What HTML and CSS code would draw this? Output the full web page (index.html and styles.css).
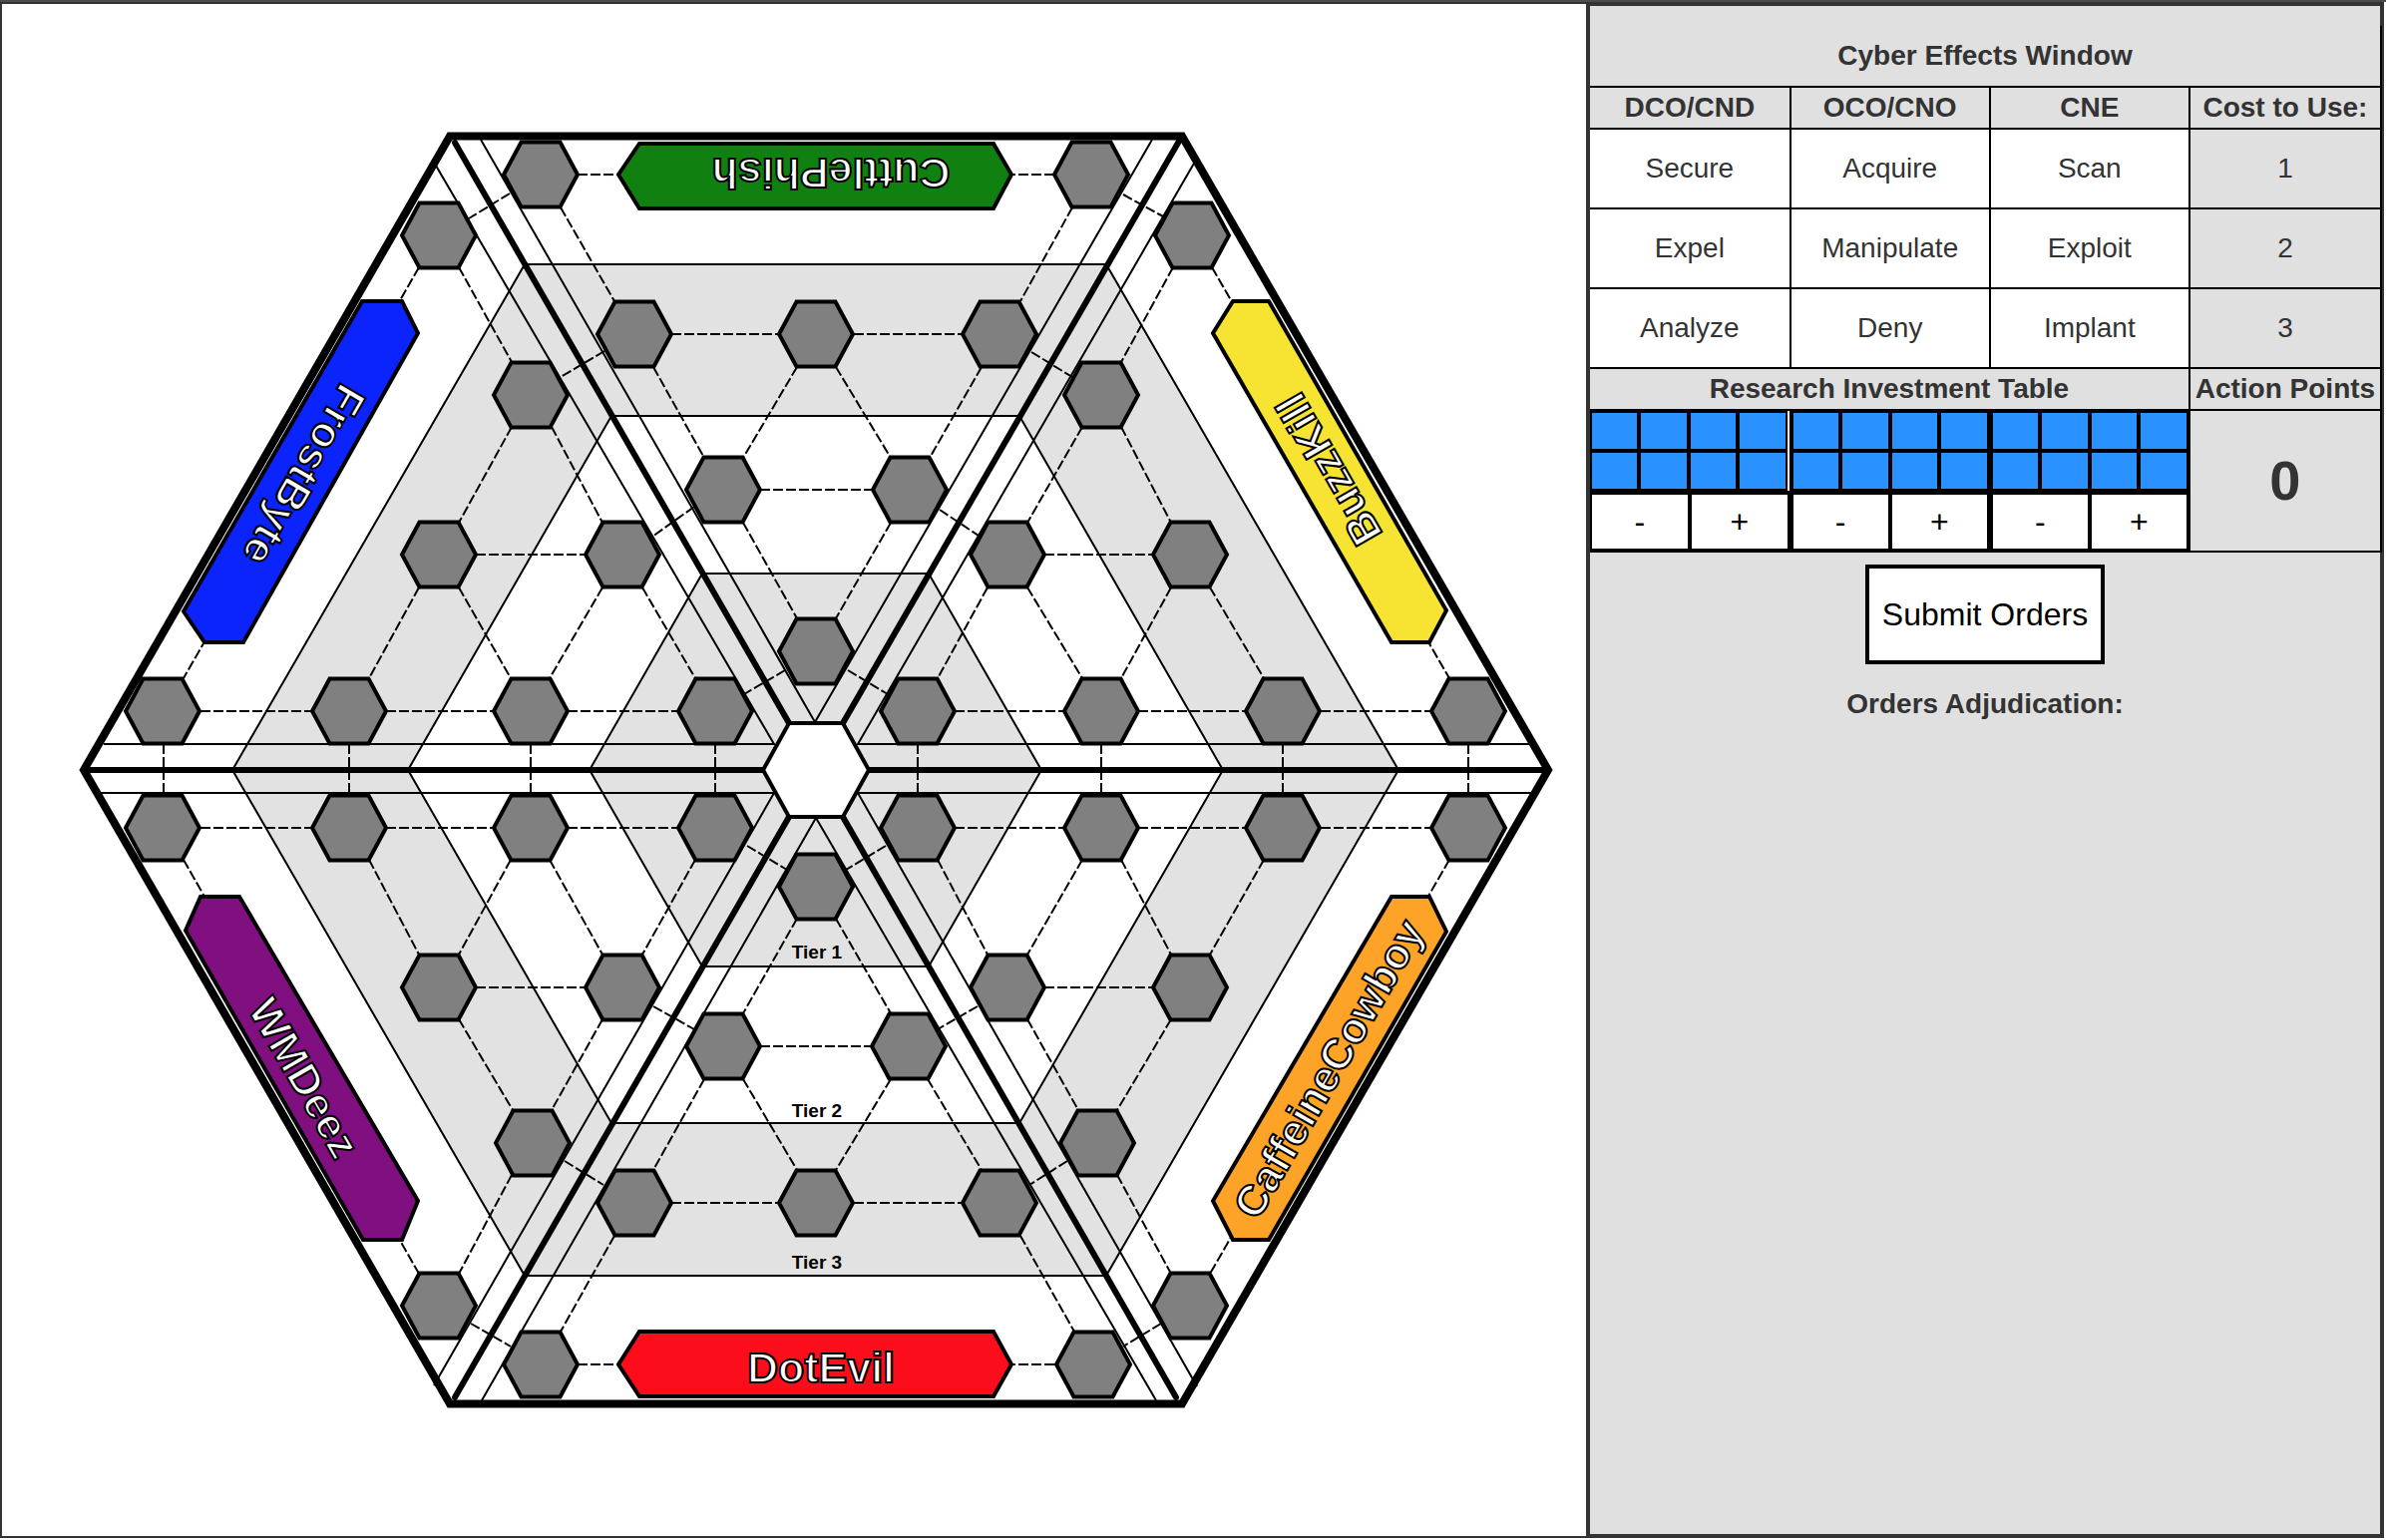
FILE: index.html
```html
<!DOCTYPE html>
<html lang="en">
<head>
<meta charset="utf-8">
<title>Cyber Effects</title>
<meta name="viewport" content="width=device-width, initial-scale=1">
<link rel="stylesheet" href="styles.css">
</head>
<body>
<div class="app">
  <main class="board">
    <svg class="map" viewBox="2 4 1588 1536" role="img" aria-label="Network map">
      <defs>
        <polygon id="node" points="-37,0 -19.5,-32.5 19.5,-32.5 37,0 19.5,32.5 -19.5,32.5"/>
      </defs>

      <!-- tiers, outermost first -->
      <polygon class="field" points="84,772 451,136.5 1185,136.5 1552,772 1185,1407.5 451,1407.5"/>
      <polygon class="tier shaded" points="233,772 526,265 1109,265 1402,772 1109,1279 526,1279"/>
      <polygon class="tier" points="409,772 613,417 1022,417 1226,772 1022,1126 613,1126"/>
      <polygon class="tier shaded" points="591,772 704,575 931,575 1044,772 931,969 704,969"/>

      <!-- sector margins -->
      <g class="margin">
        <polyline points="482,140 817,724 1155,140"/>
        <polyline points="437,166 776,746 104,746"/>
        <polyline points="1198,162 860,746 1534,746"/>
        <polyline points="101,795 776,795 435,1389"/>
        <polyline points="1535,795 860,795 1200,1390"/>
        <polyline points="483,1404 818,820 1159,1404"/>
      </g>

      <!-- sector borders -->
      <g class="spoke">
        <path d="M84 772H766M871 772H1552"/>
        <path d="M456 143L791 725M1184 138L845 725"/>
        <path d="M456 1401L791 819M1179 1401L845 819"/>
      </g>
      <polygon class="hub" points="765,772 791,725 845,725 871,772 845,819 791,819"/>

      <!-- links -->
      <g class="link">
        <path d="M579 175H1057M673 335H782M856 335H966M762 491H875"/>
        <path d="M562 208L616 302M1075 208L1023 302M655 368L706 459M799 368L745 459M838 368L893 459M984 368L932 459M745 524L799 620M893 524L838 620"/>
        <path d="M420 268L184 680M460 268L513 363M513 428L460 524M553 428L604 524M477 556H587M420 589L370 680M460 589L512 680M604 589L551 680M644 589L697 680M201 713H313M387 713H495M569 713H680"/>
        <path d="M1215 268L1453 680M1176 268L1124 363M1124 428L1174 524M1085 428L1030 524M1047 556H1157M1213 589L1267 680M1174 589L1124 680M1030 589L1085 680M990 589L940 680M957 713H1067M1141 713H1250M1324 713H1436"/>
        <path d="M184 862L420 1277M513 1178L460 1277M460 1022L514 1113M604 1022L553 1113M477 990H587M370 862L420 957M512 862L460 957M551 862L604 957M697 862L644 957M201 830H313M387 830H495M569 830H680"/>
        <path d="M1453 862L1213 1277M1120 1178L1174 1277M1174 1022L1120 1113M1030 1022L1081 1113M1047 990H1157M1267 862L1213 957M1124 862L1174 957M1085 862L1030 957M940 862L990 957M957 830H1067M1141 830H1250M1324 830H1436"/>
        <path d="M579 1368H1060M673 1206H782M856 1206H966M762 1049H875"/>
        <path d="M616 1239L562 1335M1023 1239L1077 1335M706 1082L655 1173M745 1082L799 1173M893 1082L838 1173M930 1082L984 1173M799 921L745 1016M838 921L893 1016"/>
        <path d="M511 194L470 219M606 352L562 378M696 508L654 538M787 672L746 696M1126 195L1166 217M1034 353L1075 378M942 511L981 537M850 672L890 696"/>
        <path d="M164 746V795M350 746V795M532 746V795M717 746V795M920 746V795M1104 746V795M1286 746V795M1472 746V795"/>
        <path d="M749 848L789 872M655 1009L696 1032M566 1164L605 1188M472 1327L512 1350M888 848L848 872M980 1009L940 1032M1070 1164L1032 1188M1164 1327L1126 1350"/>
      </g>

      <!-- nodes -->
      <g class="node">
        <use href="#node" x="542" y="175"/><use href="#node" x="1094" y="175"/>
        <use href="#node" x="636" y="335"/><use href="#node" x="818" y="335"/><use href="#node" x="1002" y="335"/>
        <use href="#node" x="725" y="491"/><use href="#node" x="912" y="491"/>
        <use href="#node" x="818" y="653"/>

        <use href="#node" x="440" y="236"/><use href="#node" x="532" y="396"/>
        <use href="#node" x="440" y="556"/><use href="#node" x="624" y="556"/>
        <use href="#node" x="163" y="713"/><use href="#node" x="350" y="713"/><use href="#node" x="532" y="713"/><use href="#node" x="717" y="713"/>

        <use href="#node" x="1195" y="236"/><use href="#node" x="1104" y="396"/>
        <use href="#node" x="1010" y="556"/><use href="#node" x="1193" y="556"/>
        <use href="#node" x="920" y="713"/><use href="#node" x="1104" y="713"/><use href="#node" x="1286" y="713"/><use href="#node" x="1472" y="713"/>

        <use href="#node" x="163" y="830"/><use href="#node" x="350" y="830"/><use href="#node" x="532" y="830"/><use href="#node" x="717" y="830"/>
        <use href="#node" x="440" y="990"/><use href="#node" x="624" y="990"/>
        <use href="#node" x="534" y="1146"/><use href="#node" x="440" y="1309"/>

        <use href="#node" x="920" y="830"/><use href="#node" x="1104" y="830"/><use href="#node" x="1286" y="830"/><use href="#node" x="1472" y="830"/>
        <use href="#node" x="1010" y="990"/><use href="#node" x="1193" y="990"/>
        <use href="#node" x="1100" y="1146"/><use href="#node" x="1193" y="1309"/>

        <use href="#node" x="818" y="889"/>
        <use href="#node" x="725" y="1049"/><use href="#node" x="911" y="1049"/>
        <use href="#node" x="636" y="1206"/><use href="#node" x="818" y="1206"/><use href="#node" x="1002" y="1206"/>
        <use href="#node" x="542" y="1368"/><use href="#node" x="1096" y="1368"/>
      </g>

      <!-- home bases -->
      <g class="base">
        <polygon class="green" points="620,175 641,144 996,144 1014,175 996,209 641,209"/>
        <polygon class="blue" points="363,302 403,302 419,334 244,644 205,644 184,613"/>
        <polygon class="yellow" points="1236,302 1272,302 1450,612 1433,644 1395,644 1216,334"/>
        <polygon class="purple" points="201,899 240,899 419,1204 403,1243 364,1243 186,933"/>
        <polygon class="orange" points="1395,899 1433,899 1450,934 1272,1243 1236,1243 1216,1204"/>
        <polygon class="red" points="620,1368 641,1335 996,1335 1014,1368 996,1400 641,1400"/>
      </g>
      <g class="team">
        <text x="833" y="159" transform="rotate(180 833 159)">CuttlePhish</text>
        <text x="292" y="469" transform="rotate(120 292 469)">FrostByte</text>
        <text x="1345" y="463" transform="rotate(-120 1345 463)">BuzzKill</text>
        <text x="292" y="1088" transform="rotate(60 292 1088)">WMDeez</text>
        <text x="1345" y="1079" transform="rotate(-60 1345 1079)">CaffeineCowboy</text>
        <text x="823" y="1386">DotEvil</text>
      </g>
      <g class="tier-name">
        <text x="819" y="961">Tier 1</text>
        <text x="819" y="1120">Tier 2</text>
        <text x="819" y="1272">Tier 3</text>
      </g>
    </svg>
  </main>

  <aside class="panel">
    <table class="effects">
      <colgroup><col class="c1"><col class="c2"><col class="c3"><col class="c4"></colgroup>
      <thead>
        <tr class="title"><th colspan="4">Cyber Effects Window</th></tr>
        <tr class="heads"><th>DCO/CND</th><th>OCO/CNO</th><th>CNE</th><th>Cost to Use:</th></tr>
      </thead>
      <tbody>
        <tr class="actions"><td>Secure</td><td>Acquire</td><td>Scan</td><td class="cost">1</td></tr>
        <tr class="actions"><td>Expel</td><td>Manipulate</td><td>Exploit</td><td class="cost">2</td></tr>
        <tr class="actions"><td>Analyze</td><td>Deny</td><td>Implant</td><td class="cost">3</td></tr>
        <tr class="heads"><th colspan="3">Research Investment Table</th><th>Action Points</th></tr>
        <tr class="research">
          <td>
            <div class="meter edged"><i></i><i></i><i></i><i></i><i></i><i></i><i></i><i></i></div>
            <div class="steps"><button type="button" aria-label="Lower DCO/CND">-</button><button type="button" aria-label="Raise DCO/CND">+</button></div>
          </td>
          <td>
            <div class="meter"><i></i><i></i><i></i><i></i><i></i><i></i><i></i><i></i></div>
            <div class="steps"><button type="button" aria-label="Lower OCO/CNO">-</button><button type="button" aria-label="Raise OCO/CNO">+</button></div>
          </td>
          <td>
            <div class="meter"><i></i><i></i><i></i><i></i><i></i><i></i><i></i><i></i></div>
            <div class="steps"><button type="button" aria-label="Lower CNE">-</button><button type="button" aria-label="Raise CNE">+</button></div>
          </td>
          <td class="points">0</td>
        </tr>
      </tbody>
    </table>
    <button class="submit" type="submit">Submit Orders</button>
    <h2 class="log-title">Orders Adjudication:</h2>
  </aside>
</div>
</body>
</html>
```

FILE: styles.css
```css
* {
  box-sizing: border-box;
}

body {
  margin: 0;
  border-top: 2px solid #4c4c4c;
  background: #fff;
  color: #333;
  font-family: "Liberation Sans", Arial, sans-serif;
  font-size: 28px;
  line-height: 32px;
}

.app {
  display: grid;
  grid-template-columns: minmax(0, 159fr) minmax(0, 80fr);
  min-height: calc(100vh - 4px);
  margin-right: 2px;
}

/* Map */

.board {
  border: 2px solid #333;
  border-right: 0;
  background: #fff;
}

.map {
  display: block;
  width: 100%;
}

.field {
  fill: #fff;
  stroke: #000;
  stroke-width: 8;
}

.tier {
  fill: #fff;
  stroke: #000;
  stroke-width: 2;
}

.shaded {
  fill: #e2e2e2;
}

.margin {
  fill: none;
  stroke: #000;
  stroke-width: 2;
}

.spoke {
  fill: none;
  stroke: #000;
  stroke-width: 6;
  stroke-linecap: round;
}

.hub {
  fill: #fff;
  stroke: #000;
  stroke-width: 4;
}

.link {
  fill: none;
  stroke: #000;
  stroke-width: 2;
  stroke-dasharray: 10 3;
}

.node {
  fill: #808080;
  stroke: #000;
  stroke-width: 4;
}

.base {
  stroke: #000;
  stroke-width: 4;
}

.green { fill: #108010; }
.blue { fill: #0b24fb; }
.yellow { fill: #f7e332; }
.purple { fill: #800f7f; }
.orange { fill: #fda428; }
.red { fill: #fc0d1b; }

.team {
  fill: #fff;
  stroke: #000;
  stroke-width: 2px;
  font-size: 43px;
  font-weight: bold;
  text-anchor: middle;
}

.tier-name {
  fill: #000;
  font-size: 19px;
  font-weight: bold;
  text-anchor: middle;
}

/* Orders panel */

.panel {
  display: flex;
  flex-direction: column;
  align-items: center;
  border: 4px solid #333;
  background: #e0e0e0;
}

.effects {
  align-self: flex-start;
  width: calc(100% + 2px);
  margin: 20px -2px 12px 0;
  table-layout: fixed;
  border-spacing: 0;
  text-align: center;
}

.c1 { width: 25.4%; }
.c2, .c3 { width: 25.2%; }
.c4 { width: 24.2%; }

.effects th,
.effects td {
  padding: 0;
  border: solid #000;
  border-width: 0 2px 2px 0;
  white-space: nowrap;
}

.title { height: 62px; }
.heads { height: 42px; }
.actions { height: 80px; }
.actions td { background: #fff; }
.actions .cost { background: none; }

.meter,
.steps {
  display: grid;
  gap: 4px;
  background: #000;
}

.meter {
  grid-template-columns: repeat(4, 1fr);
  grid-auto-rows: 36px;
  padding: 2px;
}

.meter i {
  background: #2a92ff;
}

.edged {
  border-right: 2px solid #eee;
}

.steps {
  grid-template-columns: repeat(2, 1fr);
  grid-auto-rows: 54px;
  padding: 4px 2px 2px;
}

button {
  margin: 0;
  padding: 0;
  border: 0;
  border-radius: 0;
  background: #fff;
  color: #000;
  font: inherit;
  font-size: 32px;
}

.effects .points {
  font-size: 56px;
  font-weight: bold;
}

.submit {
  width: 240px;
  height: 100px;
  border: 4px solid #000;
}

.log-title {
  margin: 24px 0 0;
  font-size: 28px;
}
```
